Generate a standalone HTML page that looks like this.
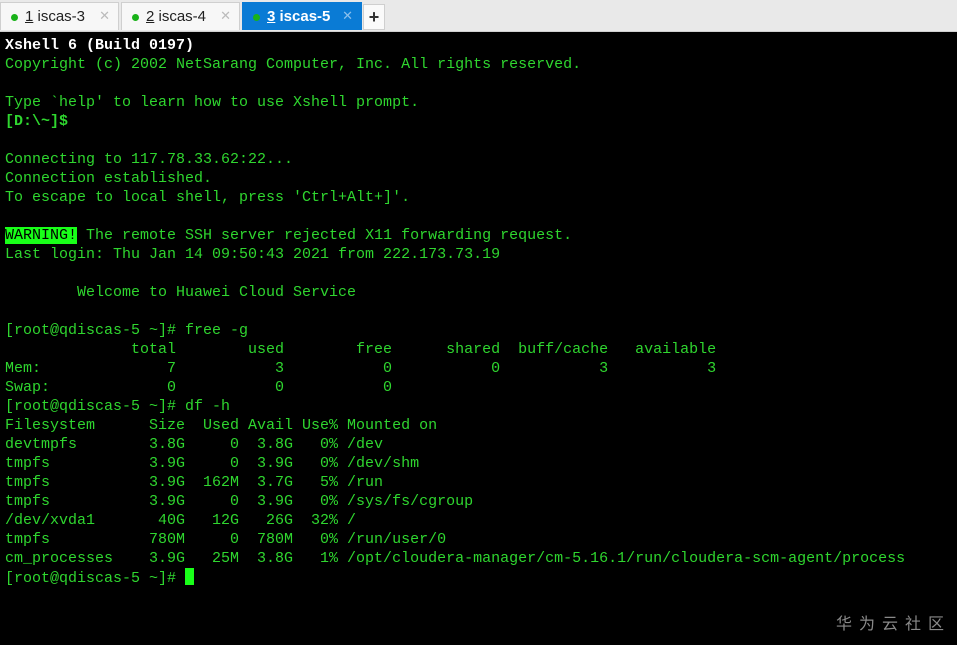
<!DOCTYPE html>
<html><head><meta charset="utf-8"><style>
html,body{margin:0;padding:0;width:957px;height:645px;overflow:hidden;background:#000}
.bar{position:absolute;left:0;top:0;width:957px;height:31px;background:#e9e9e9;border-bottom:1px solid #cfcfcf}
.tab{position:absolute;top:2px;height:28px;background:#f7f7f7;border:1px solid #cfcfcf;border-bottom:none;font-family:"Liberation Sans","DejaVu Sans",sans-serif;font-size:15px;color:#222;box-sizing:border-box}
.tab .dot{position:absolute;left:10px;top:11px;width:7px;height:7px;border-radius:50%;background:#19b219}
.tab .t{position:absolute;left:24px;top:5px}
.tab .x{position:absolute;right:8px;top:5px;color:#bbb;font-size:13px}
.tab.act{background:#0a7bd5;border-color:#0a7bd5;color:#fff;font-weight:bold}
.tab.act .x{color:#8cc0ec}
.plus{position:absolute;left:363px;top:4px;width:22px;height:26px;background:#fafafa;border:1px solid #cfcfcf;box-sizing:border-box;font:bold 18px "Liberation Sans",sans-serif;color:#333;text-align:center;line-height:24px}
pre{position:absolute;left:5px;top:36px;margin:0;font-family:"Liberation Mono",monospace;font-size:15px;line-height:19px;color:#2fd62f}
.w{color:#fff;font-weight:bold}
.b{font-weight:bold}
.warn{background:#19ff19;color:#000}
.cur{background:#19ff19;display:inline-block;width:9px;height:17px;vertical-align:-3px}
.wm{position:absolute;left:836px;top:610px;font-family:"Noto Sans CJK SC",sans-serif;font-size:16px;color:#8a8a8a;letter-spacing:7px}
</style></head><body>
<div class="bar"></div>
<div class="tab" style="left:0;width:119px"><span class="dot"></span><span class="t"><u>1</u> iscas-3</span><span class="x">✕</span></div>
<div class="tab" style="left:121px;width:119px"><span class="dot"></span><span class="t"><u>2</u> iscas-4</span><span class="x">✕</span></div>
<div class="tab act" style="left:242px;width:120px"><span class="dot"></span><span class="t"><u>3</u> iscas-5</span><span class="x">✕</span></div>
<div class="plus">+</div>
<pre><span class="w">Xshell 6 (Build 0197)</span>
Copyright (c) 2002 NetSarang Computer, Inc. All rights reserved.

Type `help' to learn how to use Xshell prompt.
<span class="b">[D:\~]$</span>

Connecting to 117.78.33.62:22...
Connection established.
To escape to local shell, press 'Ctrl+Alt+]'.

<span class="warn">WARNING!</span> The remote SSH server rejected X11 forwarding request.
Last login: Thu Jan 14 09:50:43 2021 from 222.173.73.19

        Welcome to Huawei Cloud Service

[root@qdiscas-5 ~]# free -g
              total        used        free      shared  buff/cache   available
Mem:              7           3           0           0           3           3
Swap:             0           0           0
[root@qdiscas-5 ~]# df -h
Filesystem      Size  Used Avail Use% Mounted on
devtmpfs        3.8G     0  3.8G   0% /dev
tmpfs           3.9G     0  3.9G   0% /dev/shm
tmpfs           3.9G  162M  3.7G   5% /run
tmpfs           3.9G     0  3.9G   0% /sys/fs/cgroup
/dev/xvda1       40G   12G   26G  32% /
tmpfs           780M     0  780M   0% /run/user/0
cm_processes    3.9G   25M  3.8G   1% /opt/cloudera-manager/cm-5.16.1/run/cloudera-scm-agent/process
[root@qdiscas-5 ~]# <span class="cur"></span></pre>
<div class="wm">华为云社区</div>
</body></html>
